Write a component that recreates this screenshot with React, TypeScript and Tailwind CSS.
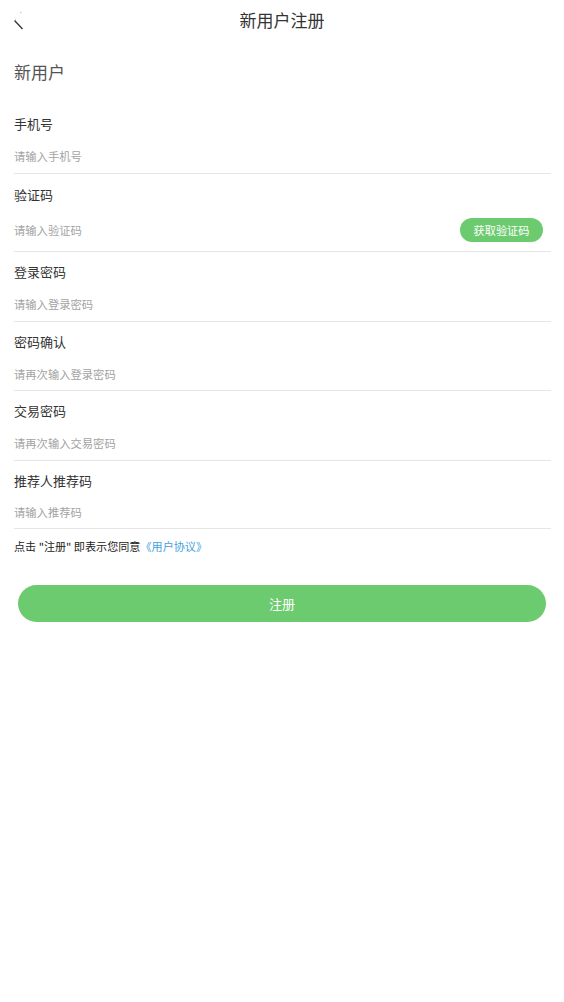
import React from "react";

const font = { fontFamily: '"Noto Sans CJK SC", "Noto Sans", sans-serif' };

function Row({
  label,
  placeholder,
  code,
  extra = "",
  gap = "mt-[6px]",
}: {
  label: string;
  placeholder: string;
  code?: boolean;
  extra?: string;
  gap?: string;
}) {
  return (
    <div className={`flex flex-col border-b border-[#e6e6e6] ${code ? "pt-[11px] pb-[5px]" : "pt-[10px]"} ${extra}`}>
      <div className="h-[20px] leading-[20px] text-[13px] text-[#333]">{label}</div>
      <div className={`flex h-[32px] items-center justify-between ${code ? "mt-[9px]" : gap}`}>
        <span className="text-[11.3px] text-[#a3a3a3]">{placeholder}</span>
        {code && (
          <div className="mr-[8px] flex h-[24px] w-[83px] items-center justify-center rounded-full bg-[#6dcb6f] text-[11.2px] text-white">
            获取验证码
          </div>
        )}
      </div>
    </div>
  );
}

export default function App() {
  return (
    <div className="min-h-[1002px] w-full bg-white" style={font}>
      <div className="relative flex h-[40px] items-center justify-center">
        <svg className="absolute left-[10px] top-[8px]" width="18" height="24" viewBox="0 0 18 24">
          <path d="M11.5 4 L10 5" stroke="#bbb" strokeWidth="1" fill="none" />
          <path d="M4.5 12.5 L12.5 21" stroke="#333" strokeWidth="1.3" fill="none" />
          <path d="M4.5 12.5 L6 11" stroke="#ccc" strokeWidth="1" fill="none" />
        </svg>
        <span className="text-[17px] text-[#333]">新用户注册</span>
      </div>
      <div className="flex h-[64px] items-center pl-[14px] text-[17px] text-[#555]">新用户</div>
      <div className="flex flex-col pl-[14px] pr-[13px]">
        <Row label="手机号" placeholder="请输入手机号" extra="pb-[1px]" />
        <Row label="验证码" placeholder="请输入验证码" code />
        <Row label="登录密码" placeholder="请输入登录密码" extra="pb-[1px]" />
        <Row label="密码确认" placeholder="请再次输入登录密码" />
        <Row label="交易密码" placeholder="请再次输入交易密码" extra="pb-[1px]" />
        <Row label="推荐人推荐码" placeholder="请输入推荐码" gap="mt-[5px]" />
        <div className="flex h-[34px] items-center text-[11.1px] text-[#222]">
          <span>点击 "注册" 即表示您同意</span>
          <span className="text-[#3fa3dc]">《用户协议》</span>
        </div>
      </div>
      <div className="mt-[22px] px-[18px]">
        <div className="flex h-[37px] items-center justify-center rounded-full bg-[#6dcb6f] text-[13px] text-white">
          注册
        </div>
      </div>
    </div>
  );
}
